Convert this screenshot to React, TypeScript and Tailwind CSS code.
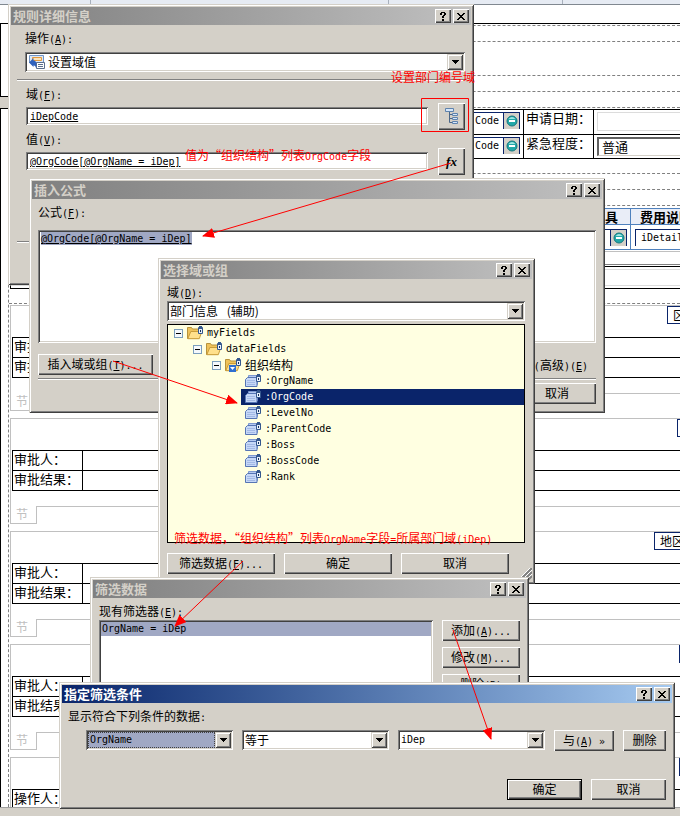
import React, { Fragment, useId } from "react";
import type { ReactNode } from "react";

const CJK = "font-['Noto_Sans_CJK_SC',sans-serif]";
const MONO = "font-['DejaVu_Sans_Mono',monospace] text-[10px]";
const RAISED_WINDOW =
  "bg-[#d4d0c8] shadow-[inset_1px_1px_#d4d0c8,inset_-1px_-1px_#404040,inset_2px_2px_#fff,inset_-2px_-2px_#808080]";
const RAISED =
  "bg-[#d4d0c8] shadow-[inset_1px_1px_#fff,inset_-1px_-1px_#404040,inset_-2px_-2px_#808080]";
const DEFAULT_RAISED =
  "bg-[#d4d0c8] border border-black shadow-[inset_1px_1px_#fff,inset_-1px_-1px_#404040,inset_-2px_-2px_#808080]";
const SUNKEN =
  "bg-white p-[2px] shadow-[inset_1px_1px_#808080,inset_-1px_-1px_#fff,inset_2px_2px_#404040,inset_-2px_-2px_#d4d0c8]";

/** Mixed text: Latin runs use the narrow mono face, "&X" underlines an access key. */
function Mixed({ text }: { text: string }) {
  const runs = text.match(/[\x20-\x7e»]+|[^\x20-\x7e»]+/g) ?? [];
  return (
    <>
      {runs.map((run, i) => {
        if (!/^[\x20-\x7e»]/.test(run)) return <Fragment key={i}>{run}</Fragment>;
        const at = run.indexOf("&");
        return (
          <span key={i} className={`leading-none whitespace-pre ${MONO}`}>
            {at < 0 ? (
              run
            ) : (
              <>
                {run.slice(0, at)}
                <u>{run[at + 1]}</u>
                {run.slice(at + 2)}
              </>
            )}
          </span>
        );
      })}
    </>
  );
}

function CaptionButton({ label, children }: { label: string; children: ReactNode }) {
  return (
    <button type="button" aria-label={label} className={`flex h-[14px] w-4 items-center justify-center ${RAISED}`}>
      {children}
    </button>
  );
}

function Dialog({
  title,
  active = false,
  className,
  children,
}: {
  title: string;
  active?: boolean;
  className: string;
  children: ReactNode;
}) {
  return (
    <section aria-label={title} className={`absolute flex flex-col p-[3px] ${RAISED_WINDOW} ${className}`}>
      <header
        className={`flex h-[18px] shrink-0 items-center gap-[2px] bg-linear-to-r px-[2px] ${
          active ? "from-[#0a246a] to-[#a6caf0] text-white" : "from-[#808080] to-[#c0c0c0] text-[#d4d0c8]"
        }`}
      >
        <h2 className="flex-1 text-[13px] leading-[18px] font-bold">{title}</h2>
        <CaptionButton label="帮助">
          <svg width="8" height="9" viewBox="0 0 8 9" shapeRendering="crispEdges" aria-hidden="true">
            <path fill="#000" d="M2 0h4v1H2zM1 1h2v2H1zM5 1h2v2H5zM4 3h2v1H4zM3 4h2v2H3zM3 7h2v2H3z" />
          </svg>
        </CaptionButton>
        <CaptionButton label="关闭">
          <svg width="8" height="7" viewBox="0 0 8 7" shapeRendering="crispEdges" aria-hidden="true">
            <path fill="#000" d="M0 0h2v1H0zM6 0h2v1H6zM1 1h2v1H1zM5 1h2v1H5zM2 2h4v1H2zM3 3h2v1H3zM2 4h4v1H2zM1 5h2v1H1zM5 5h2v1H5zM0 6h2v1H0zM6 6h2v1H6z" />
          </svg>
        </CaptionButton>
      </header>
      {children}
    </section>
  );
}

function Combo({
  value,
  label,
  id,
  icon,
  latin = false,
  selected = false,
  className = "",
}: {
  value: string;
  label?: string;
  id?: string;
  icon?: ReactNode;
  latin?: boolean;
  selected?: boolean;
  className?: string;
}) {
  return (
    <div className={`flex h-5 items-center ${SUNKEN} ${className}`}>
      {icon}
      <select
        id={id}
        aria-label={label}
        className={`h-4 min-w-0 flex-1 appearance-none px-[1px] outline-none ${latin ? MONO : "text-xs"} ${
          selected ? "border border-dotted border-[#404040] bg-[#a0a8c4] leading-[14px]" : "leading-4"
        }`}
      >
        <option>{value}</option>
      </select>
      <span
        aria-hidden="true"
        className="flex size-4 shrink-0 items-center justify-center bg-[#d4d0c8] shadow-[inset_1px_1px_#d4d0c8,inset_-1px_-1px_#404040,inset_2px_2px_#fff,inset_-2px_-2px_#808080]"
      >
        <svg width="7" height="4" viewBox="0 0 7 4" shapeRendering="crispEdges">
          <path d="M0 0h7v1H0zM1 1h5v1H1zM2 2h3v1H2zM3 3h1v1H3z" />
        </svg>
      </span>
    </div>
  );
}

function PushButton({ text, className, isDefault = false }: { text: string; className: string; isDefault?: boolean }) {
  return (
    <button
      type="button"
      className={`h-[21px] shrink-0 pb-[2px] text-xs leading-4 whitespace-nowrap ${isDefault ? DEFAULT_RAISED : RAISED} ${className}`}
    >
      <Mixed text={text} />
    </button>
  );
}

function Rule({ className = "" }: { className?: string }) {
  return <hr className={`h-[2px] shrink-0 border-t border-b border-t-[#808080] border-b-white ${className}`} />;
}

function FieldRow({ label, value, button, icon }: { label: string; value: string; button: string; icon: ReactNode }) {
  const id = useId();
  return (
    <div className="flex flex-col gap-[1px] pl-[1px]">
      <label htmlFor={id} className="text-xs leading-4">
        <Mixed text={label} />
      </label>
      <div className="flex items-start gap-[10px]">
        <input
          id={id}
          readOnly
          value={value}
          className={`mt-1 h-[18px] min-w-0 flex-1 pl-1 underline outline-none ${MONO} ${SUNKEN}`}
        />
        <button type="button" aria-label={button} className={`flex size-[27px] items-center justify-center ${RAISED}`}>
          {icon}
        </button>
      </div>
    </div>
  );
}

function ActionIcon() {
  return (
    <svg width="16" height="14" viewBox="0 0 16 14" aria-hidden="true" className="ml-[2px] mr-[2px] shrink-0">
      <path d="M.5.5h14v7H.5z" fill="#dbe8f8" stroke="#6f93c4" />
      <path d="M3.500 2.500h9v3h-9z" fill="#fbe3bb" stroke="#e59a3c" />
      <path d="M7.500 7.500h8v6h-8z" fill="#fff" stroke="#5c6f8c" />
      <path d="M9 9.500h5M9 11.500h5" stroke="#5c6f8c" />
      <path d="M0 7.500 4.500 3v2.500C7 5.500 8 8 7 13c-.5-2-1.500-2.500-2.500-2.500V12z" fill="#2f62bd" />
    </svg>
  );
}

function TreeIcon() {
  return (
    <svg width="14" height="17" viewBox="0 0 14 17" aria-hidden="true">
      <path d="M4.500 4v10.500H7M4.500 6.500H7M4.500 10.500H7" fill="none" stroke="#4a6688" />
      <path d="M.5.5h8v3h-8zM7.500 5.500h5v2h-5zM7.500 9.500h5v2h-5zM7.500 13.500h5v2h-5z" fill="#d5e6fa" stroke="#5f83ad" />
    </svg>
  );
}

function Expander() {
  return (
    <svg width="9" height="9" viewBox="0 0 9 9" shapeRendering="crispEdges" aria-hidden="true" className="shrink-0">
      <path d="M.5.5h8v8h-8z" fill="#f4f8fc" stroke="#7b9ebd" />
      <path d="M2 4h5v1H2z" fill="#000" />
    </svg>
  );
}

function Cylinder() {
  return (
    <>
      <path d="M11.500 1.500h4v6h-4z" fill="#e8f1fc" stroke="#35588e" />
      <path d="M12 .5h3M12 2.500h3" stroke="#35588e" />
      <path d="M13 4h1v2h-1z" fill="#16305e" />
    </>
  );
}

function FolderIcon({ repeating = false }: { repeating?: boolean }) {
  return (
    <svg width="16" height="14" viewBox="0 0 16 14" aria-hidden="true" className="shrink-0">
      <path d="M.5 12.500v-11h4l1 1.500h6v9.500z" fill="#efc25a" stroke="#b8933c" />
      <path d="m.8 12.700 3-7.200h11l-2.500 7.200z" fill="#ffe08c" stroke="#c89c3c" />
      <Cylinder />
      {repeating && (
        <>
          <path d="M4 7h7v7H4z" fill="#2f6fd0" />
          <path d="M5 9h5l-2.500 3z" fill="#fff" />
        </>
      )}
    </svg>
  );
}

function FieldIcon() {
  return (
    <svg width="16" height="14" viewBox="0 0 16 14" aria-hidden="true" className="shrink-0">
      <path d="M3.500 1.500h9v9h-9z" fill="#b4c9f0" stroke="#7d98d0" />
      <path d="M.5 5.500 2.500 3.500h9.500v9H.5z" fill="#c6d8f7" stroke="#5675b4" />
      <path d="M2 6.500h8M2 8.500h8M2 10.500h8" stroke="#a3b9e6" />
      <Cylinder />
    </svg>
  );
}

function Bubble() {
  return (
    <svg width="12" height="12" viewBox="0 0 12 12" aria-hidden="true">
      <circle cx="6" cy="6" r="5" fill="#22a8a8" stroke="#15777f" />
      <path d="M2.500 4Q6 0 9.500 4z" fill="#9fe6e2" />
      <path d="M3 5h6v2H3z" fill="#fff" />
    </svg>
  );
}

function BoundField({ value, label }: { value: string; label: string }) {
  return (
    <div className="flex h-[17px] border-t border-r border-[#0a246a]">
      <input readOnly aria-label={label} value={value} className={`w-[62px] pr-1 text-right outline-none ${MONO}`} />
      <button type="button" aria-label="绑定" className="flex w-4 items-center justify-center border-l border-[#0a246a] bg-[#d4d0c8]">
        <Bubble />
      </button>
    </div>
  );
}

function Dashes({ className }: { className: string }) {
  return <div className={`shrink-0 border-t border-dashed border-[#808080] ${className}`} />;
}

function Approval({ rows, badge, badgeClass }: { rows: string[]; badge: string; badgeClass: string }) {
  return (
    <div className="mb-[7px] ml-[1px] h-[106px] shrink-0">
      <div className="h-[88px] border-t border-l border-[#c0c0c0] pl-[1px]">
        <div className={`ml-auto h-[18px] overflow-hidden border border-r-0 border-[#0a246a] text-xs leading-4 whitespace-nowrap ${badgeClass}`}>
          {badge}
        </div>
        <table className="mt-[13px] w-full table-fixed border-separate border-spacing-0 border-t border-l border-black text-[13px] leading-4">
          <tbody>
            {rows.map((row) => (
              <tr key={row}>
                <th scope="row" className="h-5 w-[70px] border-r border-b border-black p-0 pl-[1px] text-left align-top font-normal whitespace-nowrap">
                  {row}
                </th>
                <td className="border-b border-black p-0" />
              </tr>
            ))}
          </tbody>
        </table>
      </div>
      <div className="flex h-[18px]">
        <div className="w-[27px] border-r border-b border-l border-[#c0c0c0] pl-[5px] text-xs leading-4 text-[#c0c0c0]">节</div>
        <div className="flex-1 border-t border-[#c0c0c0]" />
      </div>
    </div>
  );
}

const APPROVAL = ["审批人：", "审批结果："];

function FormCanvas() {
  return (
    <div className="flex min-h-0 flex-1 overflow-hidden bg-white">
      <div className="flex w-2 shrink-0 flex-col pt-[18px]">
        <div className="h-[74px] border-t border-b border-l border-black" />
        <div className="h-[11px] bg-[#d4d0c8]" />
        <div className="flex-1 border-t border-l border-black" />
      </div>
      <div className="flex min-w-0 flex-1 flex-col border-l border-dashed border-[#808080] pt-[18px]">
        <div className="mb-[1px] h-[1px] shrink-0 bg-black" />
        <Dashes className="h-4" />
        <Dashes className="h-[34px]" />
        <Dashes className="h-4" />
        <Dashes className="h-4" />
        <Dashes className="h-[2px]" />

        <div className="grid shrink-0 grid-cols-[515px_70px_1fr] border-t border-black text-[13px] leading-4">
          <div className="flex h-[25px] justify-end border-r border-b border-black pt-[2px] pr-[3px]">
            <BoundField value="Code" label="申请编号" />
          </div>
          <label htmlFor="apply-date" className="border-r border-b border-black pl-[2px]">申请日期：</label>
          <div className="border-b border-black pt-[2px] pl-[3px]">
            <input id="apply-date" readOnly className="block h-[19px] w-full border border-r-0 border-[#dcdcdc] outline-none" />
          </div>
          <div className="flex h-6 justify-end border-r border-b border-black pt-[2px] pr-[3px]">
            <BoundField value="Code" label="部门编号" />
          </div>
          <label htmlFor="urgency" className="border-r border-b border-black pl-[2px]">紧急程度：</label>
          <div className="border-b border-black pt-[2px] pl-[3px]">
            <select id="urgency" className="block h-[19px] w-full appearance-none border-t-2 border-b border-l-2 border-[#606060] border-b-[#d4d0c8] pl-[3px] leading-4 outline-none">
              <option>普通</option>
            </select>
          </div>
        </div>

        <div className="h-[14px] shrink-0" />
        <Dashes className="h-4" />
        <Dashes className="h-4" />
        <Dashes className="h-[3px]" />

        <table className="w-full shrink-0 table-fixed border-separate border-spacing-0 border-t border-[#4f81bd]">
          <thead>
            <tr className="bg-[#e9edf7] text-[13px] leading-[15px]">
              <th className="h-4 w-[622px] border-r border-b border-[#4f81bd] p-0 pr-3 text-right">具</th>
              <th className="overflow-hidden border-b border-[#4f81bd] p-0 pl-[9px] text-left whitespace-nowrap">费用说明</th>
            </tr>
          </thead>
          <tbody>
            <tr>
              <td className="h-[25px] border-r border-b border-[#4f81bd] p-0 pr-[3px]">
                <div className="flex justify-end">
                  <BoundField value="" label="工具" />
                </div>
              </td>
              <td className="border-b border-[#4f81bd] p-0 pl-[4px]">
                <input
                  readOnly
                  aria-label="费用说明"
                  value="iDetail"
                  className={`block h-[17px] w-full border-t border-l border-[#0a246a] pl-[5px] outline-none ${MONO}`}
                />
              </td>
            </tr>
          </tbody>
        </table>

        <div className="mt-[1px] h-[13px] shrink-0 border-t border-[#c0c0c0]" />
        <div className="h-[2px] shrink-0 border-t border-[#808080]" />
        <div className="h-[3px] shrink-0 border-t border-black" />
        <div className="h-4 shrink-0 border-t border-[#dcdcdc]" />
        <div className="ml-[1px] h-1 shrink-0 border-t border-b border-l border-t-[#dcdcdc] border-b-black border-l-black" />
        <div className="h-[14px] shrink-0" />
        <Dashes className="h-[2px]" />

        <Approval rows={APPROVAL} badge="区" badgeClass="w-[13px] pl-[5px]" />
        <Approval rows={APPROVAL} badge="" badgeClass="w-[3px]" />
        <Approval rows={APPROVAL} badge="地区" badgeClass="w-[26px] pl-[5px]" />
        <Approval rows={APPROVAL} badge="" badgeClass="w-[1px]" />
        <Approval rows={["操作人：", "操作结果："]} badge="" badgeClass="w-[1px]" />
      </div>
    </div>
  );
}

const LEAVES = [":OrgName", ":OrgCode", ":LevelNo", ":ParentCode", ":Boss", ":BossCode", ":Rank"];

function FieldTree() {
  return (
    <ul role="tree" aria-label="域" className="mt-[3px] h-[219px] border border-black bg-[#ffffe1] text-xs leading-4">
      <li role="treeitem" aria-expanded="true" className="flex h-4 items-center gap-1 pl-[6px]">
        <Expander />
        <FolderIcon />
        <Mixed text="myFields" />
      </li>
      <li role="treeitem" aria-expanded="true" className="flex h-4 items-center gap-1 pl-[25px]">
        <Expander />
        <FolderIcon />
        <Mixed text="dataFields" />
      </li>
      <li role="treeitem" aria-expanded="true" className="flex h-4 items-center gap-1 pl-[44px]">
        <Expander />
        <FolderIcon repeating />
        组织结构
      </li>
      {LEAVES.map((leaf) => (
        <li
          key={leaf}
          role="treeitem"
          aria-selected={leaf === ":OrgCode"}
          className={`ml-[73px] flex h-4 items-center gap-1 pl-1 ${leaf === ":OrgCode" ? "bg-[#0a246a] text-white" : ""}`}
        >
          <FieldIcon />
          <Mixed text={leaf} />
        </li>
      ))}
    </ul>
  );
}

function Note({ className, text }: { className: string; text: string }) {
  return (
    <p className={`absolute text-xs leading-4 whitespace-nowrap text-[#ff0000] ${className}`}>
      <Mixed text={text} />
    </p>
  );
}

export default function App() {
  return (
    <main className={`relative flex h-screen flex-col overflow-hidden text-black ${CJK}`}>
      <div className="flex h-[5px] shrink-0 border-b border-[#808890] bg-[#e6ebf3]">
        <div className="w-[91px] border-r border-[#a8b0bc]" />
        <div className="w-[298px] border-r border-[#a8b0bc]" />
        <div className="w-[174px] border-r border-[#a8b0bc]" />
      </div>
      <FormCanvas />
      <div className="h-[9px] shrink-0 border-t border-[#a0a0a0] bg-[#d4d0c8]" />

      <Dialog title="规则详细信息" className="top-1 left-2 h-[281px] w-[466px]">
        <div className="flex flex-col pt-[5px] pr-[6px] pl-[14px]">
          <label htmlFor="action" className="text-xs leading-4">
            <Mixed text="操作(&A):" />
          </label>
          <Combo id="action" value="设置域值" icon={<ActionIcon />} className="mt-[6px]" />
          <Rule className="mt-[7px] mb-[5px] -ml-2" />
          <div className="flex flex-col gap-[1px]">
            <FieldRow label="域(&F):" value="iDepCode" button="选择域" icon={<TreeIcon />} />
            <FieldRow
              label="值(&V):"
              value="@OrgCode[@OrgName = iDep]"
              button="插入公式"
              icon={<i className="font-['Liberation_Serif',serif] text-[13px] leading-4 font-bold">fx</i>}
            />
          </div>
          <Rule className="mt-[66px] -ml-2" />
        </div>
      </Dialog>

      <Dialog title="插入公式" className="top-[178px] left-[29px] h-[235px] w-[576px]">
        <div className="flex flex-col px-[6px] pt-[5px]">
          <span className="text-xs leading-4">
            <Mixed text="公式(&F):" />
          </span>
          <div
            role="textbox"
            aria-label="公式"
            contentEditable
            suppressContentEditableWarning
            className={`mt-[10px] h-[113px] pl-[3px] leading-[13px] outline-none ${MONO} ${SUNKEN}`}
          >
            <span className="inline-block bg-[#a0a8c4] underline">@OrgCode[@OrgName = iDep]</span>
          </div>
          <div className="mt-[11px] flex items-center justify-between">
            <PushButton text="插入域或组(&T)..." className="w-[115px]" />
            <span className="pr-2 text-xs leading-4">
              <Mixed text="(高级)(&E)" />
            </span>
          </div>
          <Rule className="mt-[3px] mb-[3px]" />
          <PushButton text="取消" className="w-[78px] self-end" />
        </div>
      </Dialog>

      <Dialog title="选择域或组" className="top-[258px] left-[158px] h-[326px] w-[377px]">
        <div className="flex flex-1 flex-col pt-[5px] pr-[7px] pl-[6px]">
          <label htmlFor="source" className="text-xs leading-4">
            <Mixed text="域(&D):" />
          </label>
          <Combo id="source" value={"部门信息\u2002 (辅助)"} className="mt-[1px]" />
          <FieldTree />
          <div className="mt-[10px] flex gap-[9px]">
            <PushButton text="筛选数据(&F)..." className="w-[108px]" />
            <PushButton text="确定" className="w-[108px]" />
            <PushButton text="取消" className="w-[108px]" />
          </div>
        </div>
        <svg width="13" height="13" viewBox="0 0 13 13" aria-hidden="true" className="absolute right-[3px] bottom-[3px]">
          <path d="M0 13 13 0M4 13l9-9M8 13l5-5" stroke="#808080" strokeWidth="2" />
          <path d="M-2 13 13-2M2 13 13 2M6 13l7-7" stroke="#fff" />
        </svg>
      </Dialog>

      <Dialog title="筛选数据" className="top-[577px] left-[90px] h-[160px] w-[439px]">
        <div className="flex flex-col pt-[5px] pr-[6px] pl-[6px]">
          <span className="text-xs leading-4">
            <Mixed text="现有筛选器(&E):" />
          </span>
          <div className="mt-[1px] flex gap-[9px]">
            <ul role="listbox" aria-label="现有筛选器" className={`h-[100px] flex-1 ${SUNKEN}`}>
              <li role="option" aria-selected="true" className={`bg-[#a0a8c4] pl-[1px] leading-[14px] ${MONO}`}>
                OrgName = iDep
              </li>
            </ul>
            <div className="flex flex-col gap-[6px]">
              <PushButton text="添加(&A)..." className="w-[78px]" />
              <PushButton text="修改(&M)..." className="w-[78px]" />
              <PushButton text="删除(&R)" className="w-[78px]" />
            </div>
          </div>
        </div>
      </Dialog>

      <Dialog title="指定筛选条件" active className="top-[682px] left-[59px] h-[127px] w-[616px]">
        <div className="flex flex-col pt-[5px] pr-[6px] pl-[6px]">
          <p className="text-xs leading-4">
            <Mixed text="显示符合下列条件的数据:" />
          </p>
          <div className="mt-[6px] flex items-start gap-[9px] pl-[18px]">
            <Combo label="域" value="OrgName" latin selected className="w-[147px]" />
            <Combo label="运算符" value="等于" className="w-[147px]" />
            <Combo label="值" value="iDep" latin className="w-[147px]" />
            <PushButton text="与(&A) »" className="w-[60px]" />
            <PushButton text="删除" className="w-[43px]" />
          </div>
          <div className="mt-7 flex justify-end gap-[9px]">
            <PushButton text="确定" isDefault className="w-[75px]" />
            <PushButton text="取消" className="w-[75px]" />
          </div>
        </div>
      </Dialog>

      <Note className="top-[69px] left-[391px]" text="设置部门编号域" />
      <Note className="top-[147px] left-[185px]" text="值为“组织结构”列表OrgCode字段" />
      <Note className="top-[530px] left-[174px]" text="筛选数据，“组织结构”列表OrgName字段=所属部门域(iDep)" />

      <svg width="680" height="816" viewBox="0 0 680 816" aria-hidden="true" className="pointer-events-none absolute top-0 left-0">
        <defs>
          <marker id="head" markerWidth="12" markerHeight="10" refX="11" refY="5" orient="auto" markerUnits="userSpaceOnUse">
            <path d="M0 0 12 5 0 10z" fill="#f00" />
          </marker>
        </defs>
        <g fill="none" stroke="#f00">
          <path d="M421.500 98.500h47v33h-47z" />
          <path d="M451 163 203 236" markerEnd="url(#head)" />
          <path d="M113 361 237 403" markerEnd="url(#head)" />
          <path d="M243 561 175 626" markerEnd="url(#head)" />
          <path d="M453 630 491 739" markerEnd="url(#head)" />
        </g>
      </svg>
    </main>
  );
}
